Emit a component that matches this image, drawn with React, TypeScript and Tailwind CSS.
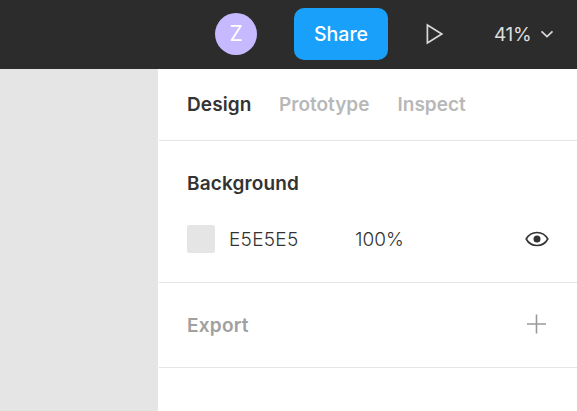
import React from "react";

function TopBar() {
  return (
    <header className="flex h-[69px] shrink-0 items-center bg-[#2c2c2c] pl-[215px]">
      <div className="-mt-px flex size-[42px] items-center justify-center rounded-full bg-[#c7b9ff] text-[21px] text-white">
        Z
      </div>
      <button className="-mt-px ml-[37px] h-[52px] w-[94px] rounded-[10px] bg-[#18a0fb] pt-[2px] text-[19.5px] font-medium text-white">
        Share
      </button>
      <svg className="ml-[38px] -mt-px" width="18" height="22" viewBox="0 0 18 22" fill="none" stroke="#d9d9d9" strokeWidth="1.7">
        <path d="M1.4 2v18L15.8 11Z" />
      </svg>
      <span className="ml-[50px] mt-px w-[37px] whitespace-nowrap text-[19px] tracking-[-0.3px] text-[#dedede]">41%</span>
      <svg className="ml-[9px] -mt-px" width="14" height="10" viewBox="0 0 14 10" fill="none" stroke="#d9d9d9" strokeWidth="1.7">
        <path d="M1.5 2.3 7 7.6l5.5-5.3" />
      </svg>
    </header>
  );
}

function Tabs() {
  return (
    <nav className="flex h-[72px] items-center border-b border-[#e5e5e5] pl-7 pt-[2px] text-[19px] font-semibold text-[#b8b8b8]">
      <span className="w-[92px] tracking-[0.1px] text-[#333]">Design</span>
      <span className="w-[118.5px]">Prototype</span>
      <span>Inspect</span>
    </nav>
  );
}

function BackgroundSection() {
  return (
    <section className="h-[142px] border-b border-[#e5e5e5] pl-7 pt-[29px] text-[19px] text-[#333]">
      <h2 className="h-7 leading-7 font-semibold tracking-[0.15px]">Background</h2>
      <div className="mt-[27px] flex h-7 items-center font-light">
        <span className="size-7 rounded-[2px] bg-[#e5e5e5]" />
        <span className="ml-[14px] w-[126px] pt-[2px] tracking-[0.3px]">E5E5E5</span>
        <span className="w-[170px] pt-[2px]">100%</span>
        <svg width="24" height="16" viewBox="0 0 24 16" fill="none" stroke="#333" strokeWidth="1.6">
          <path d="M1.2 8C6 -.7 18 -.7 22.8 8 18 16.7 6 16.7 1.2 8Z" />
          <circle cx="12" cy="8" r="3.5" fill="#333" stroke="none" />
        </svg>
      </div>
    </section>
  );
}

function ExportSection() {
  return (
    <section className="flex h-[85px] items-center border-b border-[#e5e5e5] pl-7 text-[19px] font-semibold text-[#a0a0a0]">
      <h2 className="w-[339px] pt-[2px] tracking-[0.25px]">Export</h2>
      <svg className="-mt-[3px]" width="20" height="20" viewBox="0 0 20 20" fill="none" stroke="#999" strokeWidth="1.6">
        <path d="M10.5 .5v19M1 10h19" />
      </svg>
    </section>
  );
}

export default function App() {
  return (
    <div className="flex h-[411px] w-[577px] flex-col overflow-hidden bg-[#e5e5e5] font-['Inter',sans-serif]">
      <TopBar />
      <div className="flex flex-1">
        <main className="w-[158px] shrink-0" />
        <aside className="flex-1 bg-white pl-px">
          <Tabs />
          <BackgroundSection />
          <ExportSection />
        </aside>
      </div>
    </div>
  );
}
